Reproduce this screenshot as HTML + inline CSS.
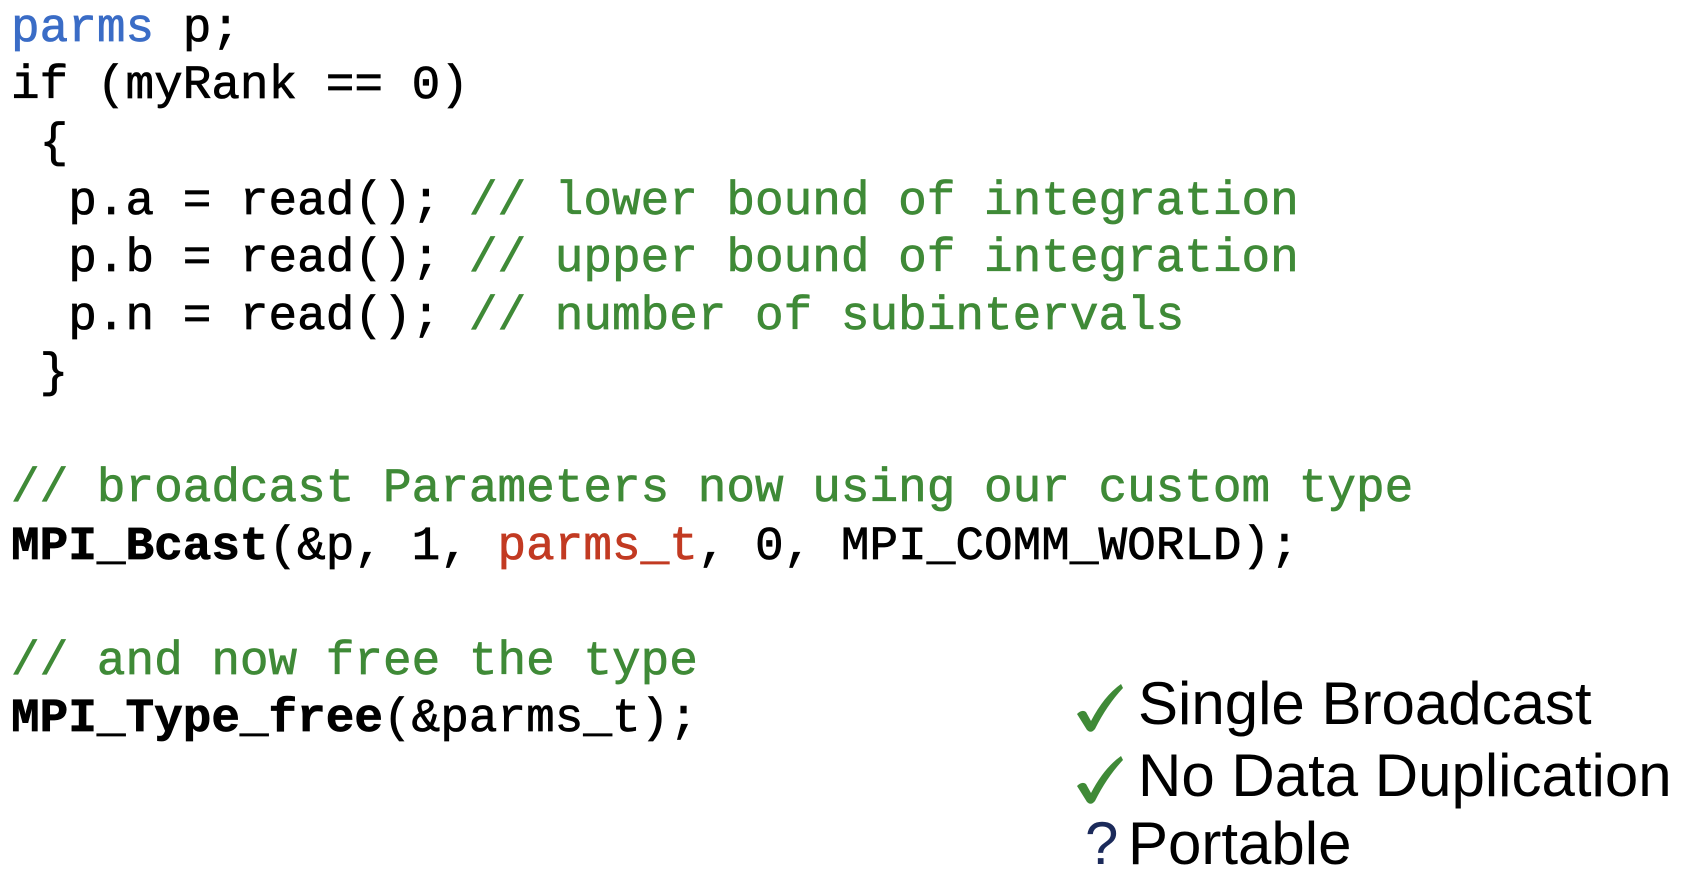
<!DOCTYPE html>
<html><head><meta charset="utf-8"><style>
html,body{margin:0;padding:0;background:#fff;width:1682px;height:888px;overflow:hidden;position:relative}
.c{position:absolute;left:11px;font-family:"Liberation Mono",monospace;font-size:47.7px;color:#000;white-space:pre;-webkit-text-stroke:0.7px #000;line-height:1}
.g{color:#3f8a37;-webkit-text-stroke:0.7px #3f8a37}
.b{color:#3a6cc6;-webkit-text-stroke:0.7px #3a6cc6}
.r{color:#c23a22;-webkit-text-stroke:0.7px #c23a22}
.k{font-weight:bold}
.t{position:absolute;font-family:"Liberation Sans",Arial,sans-serif;font-size:60px;color:#000;white-space:pre;line-height:1}
.q{color:#1b2a5a}
svg{position:absolute}
</style></head><body>
<div class="c" style="top:6px"><span class="b">parms</span> p;</div>
<div class="c" style="top:63px">if (myRank == 0)</div>
<div class="c" style="top:121px"> {</div>
<div class="c" style="top:179px">  p.a = read(); <span class="g">// lower bound of integration</span></div>
<div class="c" style="top:236px">  p.b = read(); <span class="g">// upper bound of integration</span></div>
<div class="c" style="top:294px">  p.n = read(); <span class="g">// number of subintervals</span></div>
<div class="c" style="top:351px"> }</div>
<div class="c g" style="top:466px">// broadcast Parameters now using our custom type</div>
<div class="c" style="top:524px"><span class="k">MPI_Bcast</span>(&amp;p, 1, <span class="r">parms_t</span>, 0, MPI_COMM_WORLD);</div>
<div class="c g" style="top:639px">// and now free the type</div>
<div class="c" style="top:696px"><span class="k">MPI_Type_free</span>(&amp;parms_t);</div>
<svg style="left:1076px;top:683px" width="48" height="50" viewBox="0 0 48 50"><path d="M1 31 Q6 26 10 29 L15 38 Q28 13 45 1 L47 5 Q31 22 19 46 Q15 51 11 47 Z" fill="#3f8a37"/></svg>
<div class="t" style="left:1138px;top:674px">Single Broadcast</div>
<svg style="left:1076px;top:755px" width="48" height="50" viewBox="0 0 48 50"><path d="M1 31 Q6 26 10 29 L15 38 Q28 13 45 1 L47 5 Q31 22 19 46 Q15 51 11 47 Z" fill="#3f8a37"/></svg>
<div class="t" style="left:1138px;top:746px">No Data Duplication</div>
<div class="t" style="left:1085px;top:814px"><span class="q">?</span></div>
<div class="t" style="left:1128px;top:814px">Portable</div>
</body></html>
